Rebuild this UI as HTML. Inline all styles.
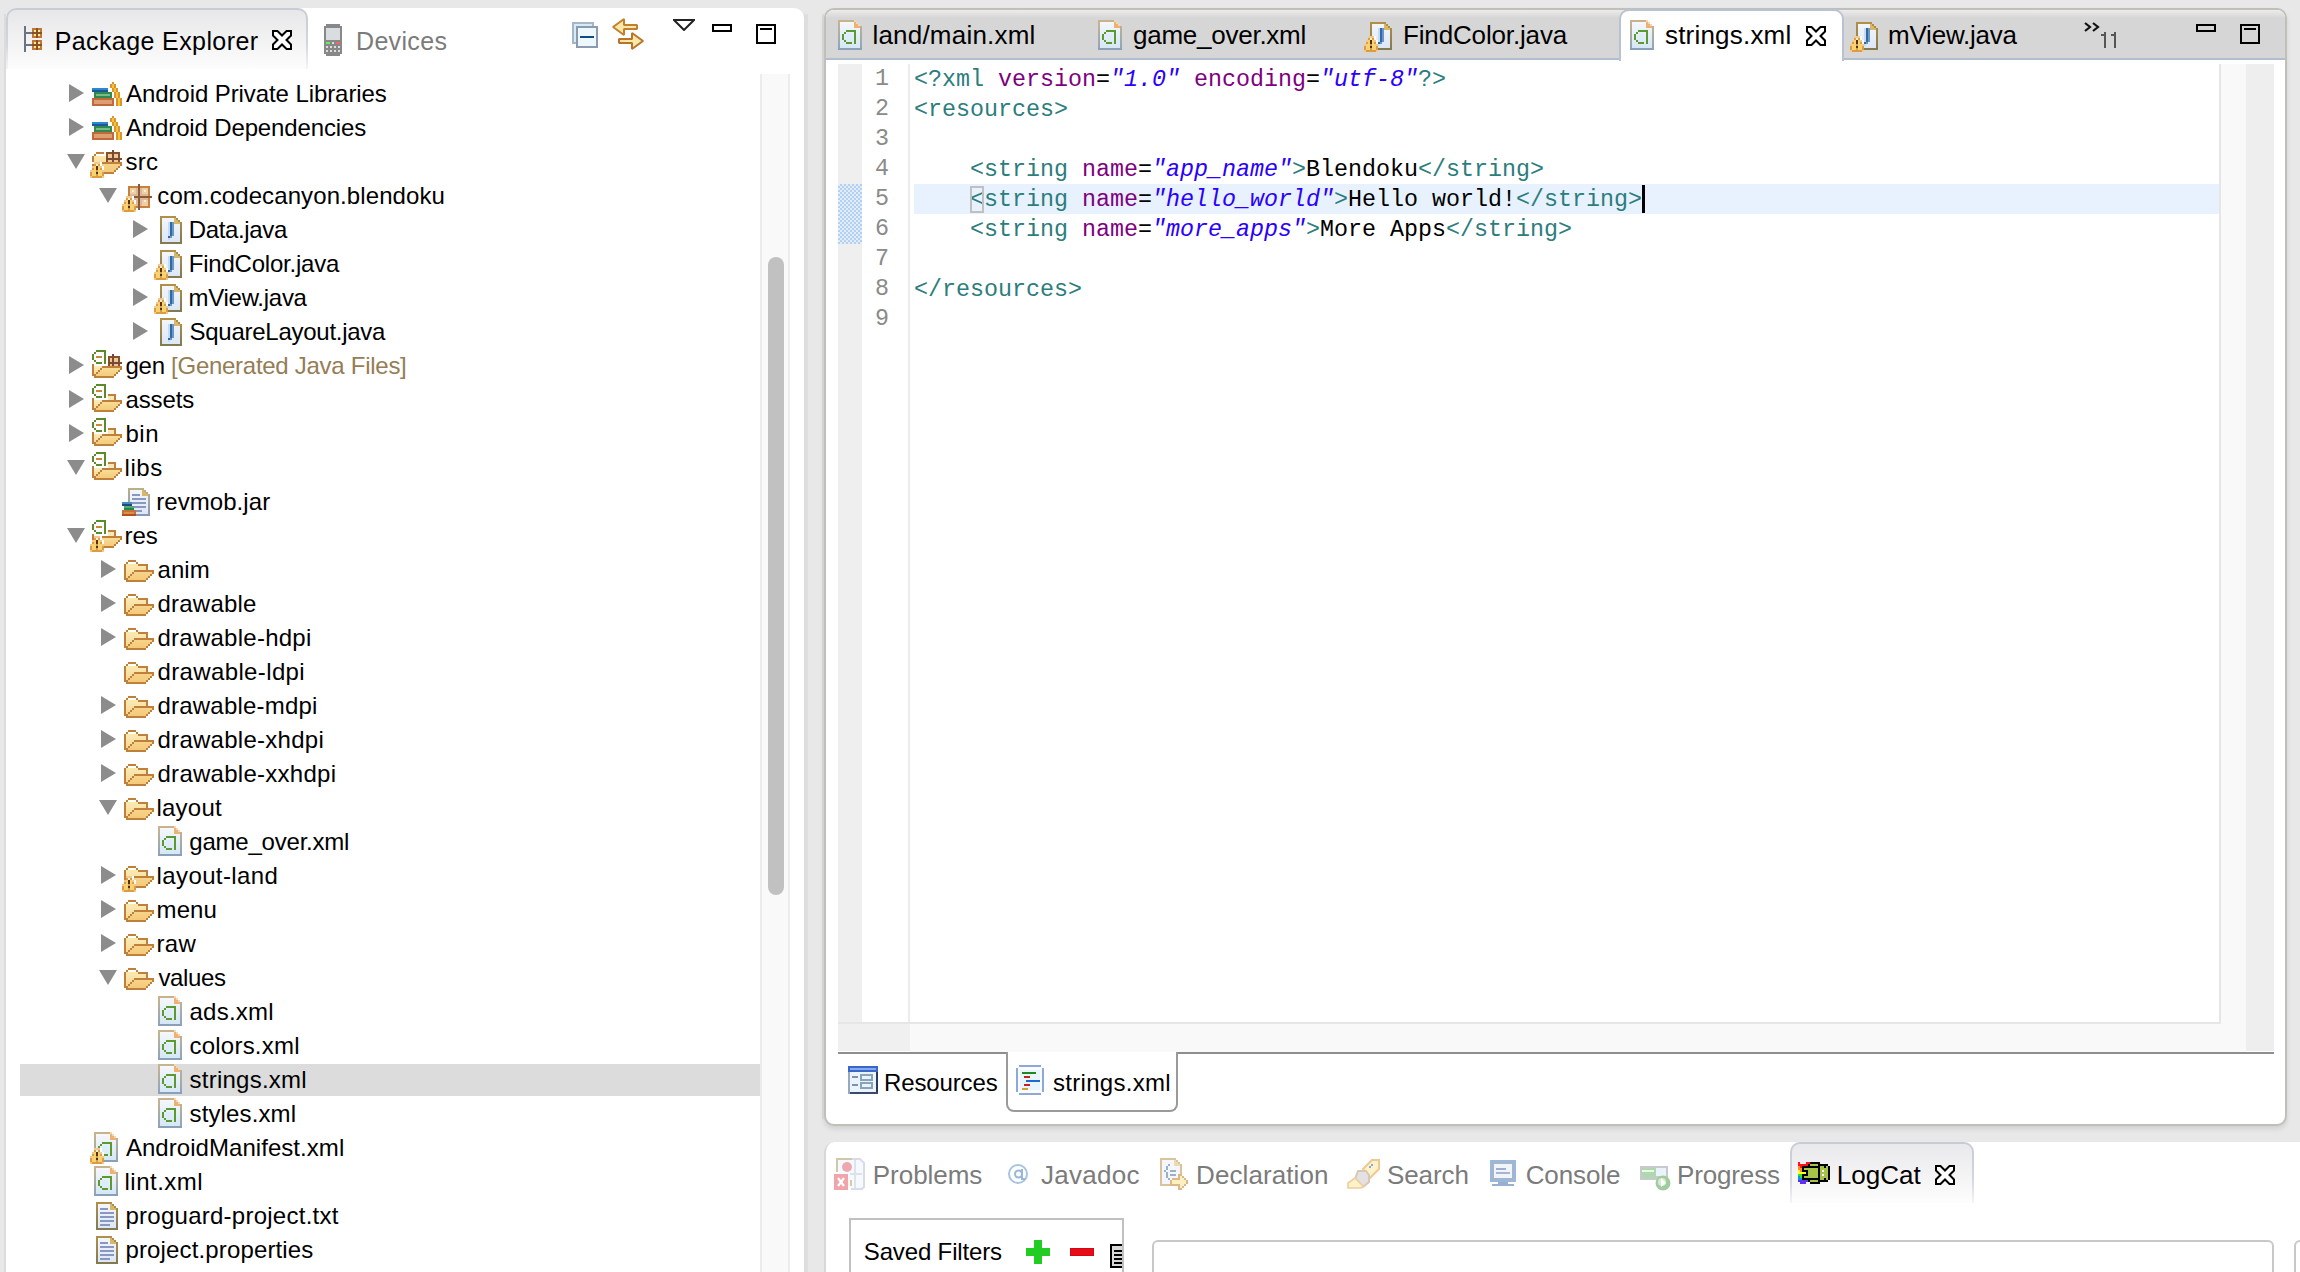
<!DOCTYPE html>
<html><head><meta charset="utf-8"><style>
*{margin:0;padding:0;box-sizing:border-box}
html,body{width:2300px;height:1272px;overflow:hidden;background:#e8e8e8;font-family:"Liberation Sans", sans-serif;}
.a{position:absolute}
.t{position:absolute;white-space:nowrap;font-size:24px;color:#000;line-height:34px;height:34px}
svg.i{position:absolute;width:32px;height:32px;overflow:visible;shape-rendering:crispEdges}
.arr{position:absolute;width:0;height:0}
.ar{border-top:9px solid transparent;border-bottom:9px solid transparent;border-left:15px solid #8c8c8c}
.ad{border-left:9px solid transparent;border-right:9px solid transparent;border-top:15px solid #8c8c8c}
.code{position:absolute;font-family:"Liberation Mono", monospace;font-size:23.33px;white-space:pre;line-height:30px;height:30px;color:#000}
.tg{color:#2c7d7d} .at{color:#7f007f} .av{color:#2a00ff;font-style:italic}
.ln{position:absolute;font-family:"Liberation Mono", monospace;font-size:23.33px;line-height:30px;color:#8a8a8a;text-align:right;width:40px}
.tab{position:absolute;white-space:nowrap;font-size:24px;line-height:34px;height:34px}
</style></head>
<body><svg width="0" height="0" style="position:absolute"><defs><symbol id="folder" viewBox="0 0 32 32" overflow="visible"><rect x="4" y="6" width="8" height="2" fill="#c0803a"/><rect x="2" y="8" width="2" height="2" fill="#c0803a"/><rect x="4" y="8" width="8" height="2" fill="#ffffff"/><rect x="12" y="8" width="2" height="2" fill="#c0803a"/><rect x="0" y="10" width="2" height="2" fill="#c0803a"/><rect x="2" y="10" width="12" height="2" fill="#fbe9a8"/><rect x="14" y="10" width="10" height="2" fill="#c0803a"/><rect x="0" y="12" width="2" height="2" fill="#c0803a"/><rect x="2" y="12" width="20" height="2" fill="#fae6b0"/><rect x="22" y="12" width="2" height="2" fill="#c0803a"/><rect x="0" y="14" width="2" height="2" fill="#c0803a"/><rect x="2" y="14" width="20" height="2" fill="#f9e4aa"/><rect x="22" y="14" width="2" height="2" fill="#c0803a"/><rect x="0" y="16" width="2" height="2" fill="#c0803a"/><rect x="2" y="16" width="8" height="2" fill="#f8e1a5"/><rect x="10" y="16" width="20" height="2" fill="#c0803a"/><rect x="0" y="18" width="2" height="2" fill="#c0803a"/><rect x="2" y="18" width="6" height="2" fill="#f8dea0"/><rect x="8" y="18" width="2" height="2" fill="#c0803a"/><rect x="10" y="18" width="18" height="2" fill="#f6d388"/><rect x="28" y="18" width="2" height="2" fill="#c0803a"/><rect x="0" y="20" width="2" height="2" fill="#c0803a"/><rect x="2" y="20" width="4" height="2" fill="#f8dc9a"/><rect x="6" y="20" width="2" height="2" fill="#c0803a"/><rect x="8" y="20" width="18" height="2" fill="#f5d084"/><rect x="26" y="20" width="2" height="2" fill="#c0803a"/><rect x="0" y="22" width="2" height="2" fill="#c0803a"/><rect x="2" y="22" width="2" height="2" fill="#f7d995"/><rect x="4" y="22" width="2" height="2" fill="#c0803a"/><rect x="6" y="22" width="18" height="2" fill="#f5ce80"/><rect x="24" y="22" width="2" height="2" fill="#c0803a"/><rect x="0" y="24" width="4" height="2" fill="#c0803a"/><rect x="4" y="24" width="18" height="2" fill="#f4cb7c"/><rect x="22" y="24" width="2" height="2" fill="#c0803a"/><rect x="2" y="26" width="20" height="2" fill="#c0803a"/></symbol><symbol id="afolder" viewBox="0 0 32 32" overflow="visible"><rect x="4" y="0" width="10" height="2" fill="#5a8a2a"/><rect x="2" y="2" width="2" height="2" fill="#5a8a2a"/><rect x="12" y="2" width="2" height="2" fill="#5a8a2a"/><rect x="0" y="4" width="2" height="2" fill="#5a8a2a"/><rect x="12" y="4" width="2" height="2" fill="#5a8a2a"/><rect x="0" y="6" width="2" height="2" fill="#5a8a2a"/><rect x="4" y="6" width="6" height="2" fill="#c88838"/><rect x="12" y="6" width="2" height="2" fill="#5a8a2a"/><rect x="0" y="8" width="2" height="2" fill="#5a8a2a"/><rect x="12" y="8" width="2" height="2" fill="#5a8a2a"/><rect x="2" y="10" width="2" height="2" fill="#5a8a2a"/><rect x="12" y="10" width="2" height="2" fill="#5a8a2a"/><rect x="16" y="10" width="8" height="2" fill="#c0803a"/><rect x="4" y="12" width="6" height="2" fill="#5a8a2a"/><rect x="12" y="12" width="2" height="2" fill="#5a8a2a"/><rect x="16" y="12" width="6" height="2" fill="#f8e8b8"/><rect x="22" y="12" width="2" height="2" fill="#c0803a"/><rect x="0" y="14" width="2" height="2" fill="#c0803a"/><rect x="16" y="14" width="6" height="2" fill="#f8e8b8"/><rect x="22" y="14" width="2" height="2" fill="#c0803a"/><rect x="0" y="16" width="2" height="2" fill="#c0803a"/><rect x="2" y="16" width="8" height="2" fill="#faeab7"/><rect x="10" y="16" width="20" height="2" fill="#c0803a"/><rect x="0" y="18" width="2" height="2" fill="#c0803a"/><rect x="2" y="18" width="6" height="2" fill="#f9e5ae"/><rect x="8" y="18" width="2" height="2" fill="#c0803a"/><rect x="10" y="18" width="18" height="2" fill="#f7db93"/><rect x="28" y="18" width="2" height="2" fill="#c0803a"/><rect x="0" y="20" width="2" height="2" fill="#c0803a"/><rect x="2" y="20" width="4" height="2" fill="#f8e1a5"/><rect x="6" y="20" width="2" height="2" fill="#c0803a"/><rect x="8" y="20" width="18" height="2" fill="#f6d68c"/><rect x="26" y="20" width="2" height="2" fill="#c0803a"/><rect x="0" y="22" width="2" height="2" fill="#c0803a"/><rect x="2" y="22" width="2" height="2" fill="#f8dd9c"/><rect x="4" y="22" width="2" height="2" fill="#c0803a"/><rect x="6" y="22" width="18" height="2" fill="#f5d185"/><rect x="24" y="22" width="2" height="2" fill="#c0803a"/><rect x="0" y="24" width="4" height="2" fill="#c0803a"/><rect x="4" y="24" width="18" height="2" fill="#f5cd7f"/><rect x="22" y="24" width="2" height="2" fill="#c0803a"/><rect x="2" y="26" width="20" height="2" fill="#c0803a"/></symbol><symbol id="genfolder" viewBox="0 0 32 32" overflow="visible"><rect x="4" y="0" width="10" height="2" fill="#5a8a2a"/><rect x="2" y="2" width="2" height="2" fill="#5a8a2a"/><rect x="12" y="2" width="2" height="2" fill="#5a8a2a"/><rect x="0" y="4" width="2" height="2" fill="#5a8a2a"/><rect x="12" y="4" width="2" height="2" fill="#5a8a2a"/><rect x="20" y="4" width="2" height="2" fill="#7a4a30"/><rect x="0" y="6" width="2" height="2" fill="#5a8a2a"/><rect x="4" y="6" width="6" height="2" fill="#c88838"/><rect x="12" y="6" width="2" height="2" fill="#5a8a2a"/><rect x="16" y="6" width="4" height="2" fill="#8a5028"/><rect x="20" y="6" width="2" height="2" fill="#7a4a30"/><rect x="22" y="6" width="6" height="2" fill="#8a5028"/><rect x="0" y="8" width="2" height="2" fill="#5a8a2a"/><rect x="12" y="8" width="2" height="2" fill="#5a8a2a"/><rect x="16" y="8" width="2" height="2" fill="#8a5028"/><rect x="18" y="8" width="2" height="2" fill="#ecc898"/><rect x="20" y="8" width="2" height="2" fill="#7a4a30"/><rect x="22" y="8" width="4" height="2" fill="#ecc898"/><rect x="26" y="8" width="2" height="2" fill="#8a5028"/><rect x="2" y="10" width="2" height="2" fill="#5a8a2a"/><rect x="12" y="10" width="2" height="2" fill="#5a8a2a"/><rect x="16" y="10" width="2" height="2" fill="#8a5028"/><rect x="18" y="10" width="2" height="2" fill="#ecc898"/><rect x="20" y="10" width="2" height="2" fill="#7a4a30"/><rect x="22" y="10" width="4" height="2" fill="#ecc898"/><rect x="26" y="10" width="2" height="2" fill="#8a5028"/><rect x="4" y="12" width="6" height="2" fill="#5a8a2a"/><rect x="12" y="12" width="2" height="2" fill="#5a8a2a"/><rect x="16" y="12" width="14" height="2" fill="#7a4a30"/><rect x="0" y="14" width="2" height="2" fill="#c0803a"/><rect x="16" y="14" width="2" height="2" fill="#8a5028"/><rect x="18" y="14" width="2" height="2" fill="#ecc898"/><rect x="20" y="14" width="2" height="2" fill="#7a4a30"/><rect x="22" y="14" width="4" height="2" fill="#ecc898"/><rect x="26" y="14" width="2" height="2" fill="#8a5028"/><rect x="0" y="16" width="2" height="2" fill="#c0803a"/><rect x="2" y="16" width="8" height="2" fill="#faeab7"/><rect x="10" y="16" width="20" height="2" fill="#c0803a"/><rect x="0" y="18" width="2" height="2" fill="#c0803a"/><rect x="2" y="18" width="6" height="2" fill="#f9e5ae"/><rect x="8" y="18" width="2" height="2" fill="#c0803a"/><rect x="10" y="18" width="18" height="2" fill="#f7db93"/><rect x="28" y="18" width="2" height="2" fill="#c0803a"/><rect x="0" y="20" width="2" height="2" fill="#c0803a"/><rect x="2" y="20" width="4" height="2" fill="#f8e1a5"/><rect x="6" y="20" width="2" height="2" fill="#c0803a"/><rect x="8" y="20" width="18" height="2" fill="#f6d68c"/><rect x="26" y="20" width="2" height="2" fill="#c0803a"/><rect x="0" y="22" width="2" height="2" fill="#c0803a"/><rect x="2" y="22" width="2" height="2" fill="#f8dd9c"/><rect x="4" y="22" width="2" height="2" fill="#c0803a"/><rect x="6" y="22" width="18" height="2" fill="#f5d185"/><rect x="24" y="22" width="2" height="2" fill="#c0803a"/><rect x="0" y="24" width="4" height="2" fill="#c0803a"/><rect x="4" y="24" width="18" height="2" fill="#f5cd7f"/><rect x="22" y="24" width="2" height="2" fill="#c0803a"/><rect x="2" y="26" width="20" height="2" fill="#c0803a"/></symbol><symbol id="srcfolder" viewBox="0 0 32 32" overflow="visible"><rect x="20" y="4" width="2" height="2" fill="#7a4a30"/><rect x="4" y="6" width="8" height="2" fill="#c0803a"/><rect x="14" y="6" width="6" height="2" fill="#8a5028"/><rect x="20" y="6" width="2" height="2" fill="#7a4a30"/><rect x="22" y="6" width="6" height="2" fill="#8a5028"/><rect x="2" y="8" width="2" height="2" fill="#c0803a"/><rect x="4" y="8" width="10" height="2" fill="#ffffff"/><rect x="14" y="8" width="2" height="2" fill="#8a5028"/><rect x="16" y="8" width="4" height="2" fill="#ecc898"/><rect x="20" y="8" width="2" height="2" fill="#7a4a30"/><rect x="22" y="8" width="4" height="2" fill="#ecc898"/><rect x="26" y="8" width="2" height="2" fill="#8a5028"/><rect x="0" y="10" width="2" height="2" fill="#c0803a"/><rect x="2" y="10" width="12" height="2" fill="#fbe9a8"/><rect x="14" y="10" width="2" height="2" fill="#8a5028"/><rect x="16" y="10" width="4" height="2" fill="#ecc898"/><rect x="20" y="10" width="2" height="2" fill="#7a4a30"/><rect x="22" y="10" width="4" height="2" fill="#ecc898"/><rect x="26" y="10" width="2" height="2" fill="#8a5028"/><rect x="0" y="12" width="2" height="2" fill="#c0803a"/><rect x="2" y="12" width="12" height="2" fill="#f9e5ac"/><rect x="14" y="12" width="16" height="2" fill="#7a4a30"/><rect x="0" y="14" width="2" height="2" fill="#c0803a"/><rect x="2" y="14" width="12" height="2" fill="#f9e2a7"/><rect x="14" y="14" width="2" height="2" fill="#8a5028"/><rect x="16" y="14" width="4" height="2" fill="#ecc898"/><rect x="20" y="14" width="2" height="2" fill="#7a4a30"/><rect x="22" y="14" width="4" height="2" fill="#ecc898"/><rect x="26" y="14" width="2" height="2" fill="#8a5028"/><rect x="10" y="16" width="20" height="2" fill="#c0803a"/><rect x="0" y="18" width="2" height="2" fill="#c0803a"/><rect x="2" y="18" width="6" height="2" fill="#f8dd9e"/><rect x="8" y="18" width="2" height="2" fill="#c0803a"/><rect x="10" y="18" width="18" height="2" fill="#f5d287"/><rect x="28" y="18" width="2" height="2" fill="#c0803a"/><rect x="0" y="20" width="2" height="2" fill="#c0803a"/><rect x="2" y="20" width="4" height="2" fill="#f7db99"/><rect x="6" y="20" width="2" height="2" fill="#c0803a"/><rect x="8" y="20" width="18" height="2" fill="#f5d083"/><rect x="26" y="20" width="2" height="2" fill="#c0803a"/><rect x="0" y="22" width="2" height="2" fill="#c0803a"/><rect x="2" y="22" width="2" height="2" fill="#f7d994"/><rect x="4" y="22" width="2" height="2" fill="#c0803a"/><rect x="6" y="22" width="18" height="2" fill="#f5cd7f"/><rect x="24" y="22" width="2" height="2" fill="#c0803a"/><rect x="0" y="24" width="4" height="2" fill="#c0803a"/><rect x="4" y="24" width="18" height="2" fill="#f4cb7c"/><rect x="22" y="24" width="2" height="2" fill="#c0803a"/><rect x="2" y="26" width="20" height="2" fill="#c0803a"/></symbol><symbol id="pkg" viewBox="0 0 32 32" overflow="visible"><rect x="14" y="4" width="2" height="2" fill="#8a5a3a"/><rect x="4" y="6" width="10" height="2" fill="#c8803e"/><rect x="14" y="6" width="2" height="2" fill="#8a5a3a"/><rect x="16" y="6" width="10" height="2" fill="#c8803e"/><rect x="4" y="8" width="2" height="2" fill="#c8803e"/><rect x="6" y="8" width="6" height="2" fill="#eccfa8"/><rect x="12" y="8" width="2" height="2" fill="#dcb898"/><rect x="14" y="8" width="2" height="2" fill="#8a5a3a"/><rect x="16" y="8" width="2" height="2" fill="#dcb898"/><rect x="18" y="8" width="6" height="2" fill="#eccfa8"/><rect x="24" y="8" width="2" height="2" fill="#c8803e"/><rect x="4" y="10" width="2" height="2" fill="#c8803e"/><rect x="6" y="10" width="2" height="2" fill="#eccfa8"/><rect x="8" y="10" width="2" height="2" fill="#faf2c0"/><rect x="10" y="10" width="2" height="2" fill="#eccfa8"/><rect x="12" y="10" width="2" height="2" fill="#dcb898"/><rect x="14" y="10" width="2" height="2" fill="#8a5a3a"/><rect x="16" y="10" width="2" height="2" fill="#dcb898"/><rect x="18" y="10" width="2" height="2" fill="#eccfa8"/><rect x="20" y="10" width="2" height="2" fill="#faf2c0"/><rect x="22" y="10" width="2" height="2" fill="#eccfa8"/><rect x="24" y="10" width="2" height="2" fill="#c8803e"/><rect x="4" y="12" width="2" height="2" fill="#c8803e"/><rect x="6" y="12" width="6" height="2" fill="#eccfa8"/><rect x="12" y="12" width="2" height="2" fill="#dcb898"/><rect x="14" y="12" width="2" height="2" fill="#8a5a3a"/><rect x="16" y="12" width="2" height="2" fill="#dcb898"/><rect x="18" y="12" width="6" height="2" fill="#eccfa8"/><rect x="24" y="12" width="2" height="2" fill="#c8803e"/><rect x="4" y="14" width="2" height="2" fill="#c8803e"/><rect x="6" y="14" width="8" height="2" fill="#dcb898"/><rect x="14" y="14" width="2" height="2" fill="#8a5a3a"/><rect x="16" y="14" width="8" height="2" fill="#dcb898"/><rect x="24" y="14" width="2" height="2" fill="#c8803e"/><rect x="4" y="16" width="2" height="2" fill="#c8803e"/><rect x="6" y="16" width="4" height="2" fill="#dcb898"/><rect x="10" y="16" width="18" height="2" fill="#8a5a3a"/><rect x="4" y="18" width="2" height="2" fill="#c8803e"/><rect x="6" y="18" width="8" height="2" fill="#dcb898"/><rect x="14" y="18" width="2" height="2" fill="#8a5a3a"/><rect x="16" y="18" width="8" height="2" fill="#dcb898"/><rect x="24" y="18" width="2" height="2" fill="#c8803e"/><rect x="4" y="20" width="2" height="2" fill="#c8803e"/><rect x="6" y="20" width="6" height="2" fill="#eccfa8"/><rect x="12" y="20" width="2" height="2" fill="#dcb898"/><rect x="14" y="20" width="2" height="2" fill="#8a5a3a"/><rect x="16" y="20" width="2" height="2" fill="#dcb898"/><rect x="18" y="20" width="2" height="2" fill="#eccfa8"/><rect x="20" y="20" width="2" height="2" fill="#faf2c0"/><rect x="22" y="20" width="2" height="2" fill="#eccfa8"/><rect x="24" y="20" width="2" height="2" fill="#c8803e"/><rect x="4" y="22" width="2" height="2" fill="#c8803e"/><rect x="6" y="22" width="6" height="2" fill="#eccfa8"/><rect x="12" y="22" width="2" height="2" fill="#dcb898"/><rect x="14" y="22" width="2" height="2" fill="#8a5a3a"/><rect x="16" y="22" width="2" height="2" fill="#dcb898"/><rect x="18" y="22" width="6" height="2" fill="#eccfa8"/><rect x="24" y="22" width="2" height="2" fill="#c8803e"/><rect x="4" y="24" width="2" height="2" fill="#c8803e"/><rect x="6" y="24" width="6" height="2" fill="#eccfa8"/><rect x="12" y="24" width="2" height="2" fill="#dcb898"/><rect x="14" y="24" width="2" height="2" fill="#8a5a3a"/><rect x="16" y="24" width="2" height="2" fill="#dcb898"/><rect x="18" y="24" width="6" height="2" fill="#eccfa8"/><rect x="24" y="24" width="2" height="2" fill="#c8803e"/><rect x="4" y="26" width="10" height="2" fill="#c8803e"/><rect x="14" y="26" width="2" height="2" fill="#8a5a3a"/><rect x="16" y="26" width="10" height="2" fill="#c8803e"/><rect x="14" y="28" width="2" height="2" fill="#8a5a3a"/></symbol><symbol id="lib" viewBox="0 0 32 32" overflow="visible"><rect x="20" y="4" width="2" height="2" fill="#dc9428"/><rect x="18" y="6" width="2" height="2" fill="#dc9428"/><rect x="20" y="6" width="2" height="2" fill="#f0c440"/><rect x="22" y="6" width="2" height="2" fill="#dc9428"/><rect x="18" y="8" width="2" height="2" fill="#dc9428"/><rect x="20" y="8" width="2" height="2" fill="#f0c440"/><rect x="22" y="8" width="2" height="2" fill="#dc9428"/><rect x="0" y="10" width="16" height="2" fill="#2a8ad0"/><rect x="20" y="10" width="2" height="2" fill="#dc9428"/><rect x="22" y="10" width="2" height="2" fill="#f0c440"/><rect x="24" y="10" width="2" height="2" fill="#dc9428"/><rect x="0" y="12" width="16" height="2" fill="#1e5896"/><rect x="20" y="12" width="2" height="2" fill="#dc9428"/><rect x="22" y="12" width="2" height="2" fill="#f0c440"/><rect x="24" y="12" width="2" height="2" fill="#dc9428"/><rect x="2" y="14" width="18" height="2" fill="#2e8a50"/><rect x="22" y="14" width="2" height="2" fill="#dc9428"/><rect x="24" y="14" width="2" height="2" fill="#f0c440"/><rect x="26" y="14" width="2" height="2" fill="#dc9428"/><rect x="2" y="16" width="2" height="2" fill="#2e8a50"/><rect x="4" y="16" width="14" height="2" fill="#7abc86"/><rect x="18" y="16" width="2" height="2" fill="#2e8a50"/><rect x="22" y="16" width="2" height="2" fill="#dc9428"/><rect x="24" y="16" width="2" height="2" fill="#f0c440"/><rect x="26" y="16" width="2" height="2" fill="#dc9428"/><rect x="2" y="18" width="18" height="2" fill="#2e8a50"/><rect x="22" y="18" width="2" height="2" fill="#dc9428"/><rect x="24" y="18" width="2" height="2" fill="#f0c440"/><rect x="26" y="18" width="2" height="2" fill="#dc9428"/><rect x="0" y="20" width="22" height="2" fill="#c2683a"/><rect x="24" y="20" width="2" height="2" fill="#dc9428"/><rect x="26" y="20" width="2" height="2" fill="#f0c440"/><rect x="28" y="20" width="2" height="2" fill="#dc9428"/><rect x="0" y="22" width="2" height="2" fill="#c2683a"/><rect x="2" y="22" width="18" height="2" fill="#dca070"/><rect x="20" y="22" width="2" height="2" fill="#c2683a"/><rect x="24" y="22" width="2" height="2" fill="#dc9428"/><rect x="26" y="22" width="2" height="2" fill="#f0c440"/><rect x="28" y="22" width="2" height="2" fill="#dc9428"/><rect x="0" y="24" width="2" height="2" fill="#c2683a"/><rect x="2" y="24" width="18" height="2" fill="#dca070"/><rect x="20" y="24" width="2" height="2" fill="#c2683a"/><rect x="24" y="24" width="2" height="2" fill="#dc9428"/><rect x="26" y="24" width="2" height="2" fill="#f0c440"/><rect x="28" y="24" width="2" height="2" fill="#dc9428"/><rect x="0" y="26" width="22" height="2" fill="#c2683a"/><rect x="24" y="26" width="2" height="2" fill="#dc9428"/><rect x="26" y="26" width="2" height="2" fill="#f0c440"/><rect x="28" y="26" width="2" height="2" fill="#dc9428"/></symbol><symbol id="java" viewBox="0 0 32 32" overflow="visible"><rect x="4" y="2" width="16" height="2" fill="#b09048"/><rect x="4" y="4" width="2" height="2" fill="#ad8e49"/><rect x="6" y="4" width="12" height="2" fill="#f2f6fc"/><rect x="18" y="4" width="2" height="2" fill="#d8b868"/><rect x="20" y="4" width="2" height="2" fill="#ad8e49"/><rect x="4" y="6" width="2" height="2" fill="#a98d49"/><rect x="6" y="6" width="12" height="2" fill="#f0f4fb"/><rect x="18" y="6" width="4" height="2" fill="#d8b868"/><rect x="22" y="6" width="2" height="2" fill="#a98d49"/><rect x="4" y="8" width="2" height="2" fill="#a68b4a"/><rect x="6" y="8" width="6" height="2" fill="#eef3fb"/><rect x="12" y="8" width="2" height="2" fill="#c8dcf0"/><rect x="14" y="8" width="2" height="2" fill="#2e6aa8"/><rect x="16" y="8" width="2" height="2" fill="#6a96c8"/><rect x="18" y="8" width="6" height="2" fill="#d8b868"/><rect x="24" y="8" width="2" height="2" fill="#a68b4a"/><rect x="4" y="10" width="2" height="2" fill="#a2894a"/><rect x="6" y="10" width="6" height="2" fill="#edf2fa"/><rect x="12" y="10" width="2" height="2" fill="#c8dcf0"/><rect x="14" y="10" width="2" height="2" fill="#2e6aa8"/><rect x="16" y="10" width="2" height="2" fill="#6a96c8"/><rect x="18" y="10" width="6" height="2" fill="#edf2fa"/><rect x="24" y="10" width="2" height="2" fill="#a2894a"/><rect x="4" y="12" width="2" height="2" fill="#9f884b"/><rect x="6" y="12" width="6" height="2" fill="#ebf0fa"/><rect x="12" y="12" width="2" height="2" fill="#c8dcf0"/><rect x="14" y="12" width="2" height="2" fill="#2e6aa8"/><rect x="16" y="12" width="2" height="2" fill="#6a96c8"/><rect x="18" y="12" width="6" height="2" fill="#ebf0fa"/><rect x="24" y="12" width="2" height="2" fill="#9f884b"/><rect x="4" y="14" width="2" height="2" fill="#9c864c"/><rect x="6" y="14" width="6" height="2" fill="#e9eff9"/><rect x="12" y="14" width="2" height="2" fill="#c8dcf0"/><rect x="14" y="14" width="2" height="2" fill="#2e6aa8"/><rect x="16" y="14" width="2" height="2" fill="#6a96c8"/><rect x="18" y="14" width="6" height="2" fill="#e9eff9"/><rect x="24" y="14" width="2" height="2" fill="#9c864c"/><rect x="4" y="16" width="2" height="2" fill="#98844c"/><rect x="6" y="16" width="6" height="2" fill="#e7eef9"/><rect x="12" y="16" width="2" height="2" fill="#c8dcf0"/><rect x="14" y="16" width="2" height="2" fill="#2e6aa8"/><rect x="16" y="16" width="2" height="2" fill="#6a96c8"/><rect x="18" y="16" width="6" height="2" fill="#e7eef9"/><rect x="24" y="16" width="2" height="2" fill="#98844c"/><rect x="4" y="18" width="2" height="2" fill="#95824d"/><rect x="6" y="18" width="6" height="2" fill="#e5edf8"/><rect x="12" y="18" width="2" height="2" fill="#c8dcf0"/><rect x="14" y="18" width="2" height="2" fill="#2e6aa8"/><rect x="16" y="18" width="2" height="2" fill="#6a96c8"/><rect x="18" y="18" width="6" height="2" fill="#e5edf8"/><rect x="24" y="18" width="2" height="2" fill="#95824d"/><rect x="4" y="20" width="2" height="2" fill="#92814e"/><rect x="6" y="20" width="6" height="2" fill="#e3ebf8"/><rect x="12" y="20" width="2" height="2" fill="#c8dcf0"/><rect x="14" y="20" width="2" height="2" fill="#2e6aa8"/><rect x="16" y="20" width="2" height="2" fill="#6a96c8"/><rect x="18" y="20" width="6" height="2" fill="#e3ebf8"/><rect x="24" y="20" width="2" height="2" fill="#92814e"/><rect x="4" y="22" width="2" height="2" fill="#8e7f4e"/><rect x="6" y="22" width="6" height="2" fill="#e2eaf7"/><rect x="12" y="22" width="2" height="2" fill="#2e6aa8"/><rect x="14" y="22" width="2" height="2" fill="#6a96c8"/><rect x="16" y="22" width="8" height="2" fill="#e2eaf7"/><rect x="24" y="22" width="2" height="2" fill="#8e7f4e"/><rect x="4" y="24" width="2" height="2" fill="#8b7d4f"/><rect x="6" y="24" width="6" height="2" fill="#e0e9f7"/><rect x="12" y="24" width="2" height="2" fill="#c8dcf0"/><rect x="14" y="24" width="10" height="2" fill="#e0e9f7"/><rect x="24" y="24" width="2" height="2" fill="#8b7d4f"/><rect x="4" y="26" width="2" height="2" fill="#877c4f"/><rect x="6" y="26" width="18" height="2" fill="#dee7f6"/><rect x="24" y="26" width="2" height="2" fill="#877c4f"/><rect x="4" y="28" width="22" height="2" fill="#847a50"/></symbol><symbol id="txt" viewBox="0 0 32 32" overflow="visible"><rect x="4" y="2" width="16" height="2" fill="#b09048"/><rect x="4" y="4" width="2" height="2" fill="#ad8e49"/><rect x="6" y="4" width="12" height="2" fill="#f2f6fc"/><rect x="18" y="4" width="2" height="2" fill="#d8b868"/><rect x="20" y="4" width="2" height="2" fill="#ad8e49"/><rect x="4" y="6" width="2" height="2" fill="#a98d49"/><rect x="6" y="6" width="12" height="2" fill="#f0f4fb"/><rect x="18" y="6" width="4" height="2" fill="#d8b868"/><rect x="22" y="6" width="2" height="2" fill="#a98d49"/><rect x="4" y="8" width="2" height="2" fill="#a68b4a"/><rect x="6" y="8" width="2" height="2" fill="#eef3fb"/><rect x="8" y="8" width="8" height="2" fill="#8898c0"/><rect x="16" y="8" width="2" height="2" fill="#eef3fb"/><rect x="18" y="8" width="6" height="2" fill="#d8b868"/><rect x="24" y="8" width="2" height="2" fill="#a68b4a"/><rect x="4" y="10" width="2" height="2" fill="#a2894a"/><rect x="6" y="10" width="18" height="2" fill="#edf2fa"/><rect x="24" y="10" width="2" height="2" fill="#a2894a"/><rect x="4" y="12" width="2" height="2" fill="#9f884b"/><rect x="6" y="12" width="2" height="2" fill="#ebf0fa"/><rect x="8" y="12" width="14" height="2" fill="#8898c0"/><rect x="22" y="12" width="2" height="2" fill="#ebf0fa"/><rect x="24" y="12" width="2" height="2" fill="#9f884b"/><rect x="4" y="14" width="2" height="2" fill="#9c864c"/><rect x="6" y="14" width="18" height="2" fill="#e9eff9"/><rect x="24" y="14" width="2" height="2" fill="#9c864c"/><rect x="4" y="16" width="2" height="2" fill="#98844c"/><rect x="6" y="16" width="2" height="2" fill="#e7eef9"/><rect x="8" y="16" width="14" height="2" fill="#8898c0"/><rect x="22" y="16" width="2" height="2" fill="#e7eef9"/><rect x="24" y="16" width="2" height="2" fill="#98844c"/><rect x="4" y="18" width="2" height="2" fill="#95824d"/><rect x="6" y="18" width="18" height="2" fill="#e5edf8"/><rect x="24" y="18" width="2" height="2" fill="#95824d"/><rect x="4" y="20" width="2" height="2" fill="#92814e"/><rect x="6" y="20" width="2" height="2" fill="#e3ebf8"/><rect x="8" y="20" width="14" height="2" fill="#8898c0"/><rect x="22" y="20" width="2" height="2" fill="#e3ebf8"/><rect x="24" y="20" width="2" height="2" fill="#92814e"/><rect x="4" y="22" width="2" height="2" fill="#8e7f4e"/><rect x="6" y="22" width="18" height="2" fill="#e2eaf7"/><rect x="24" y="22" width="2" height="2" fill="#8e7f4e"/><rect x="4" y="24" width="2" height="2" fill="#8b7d4f"/><rect x="6" y="24" width="2" height="2" fill="#e0e9f7"/><rect x="8" y="24" width="10" height="2" fill="#8898c0"/><rect x="18" y="24" width="6" height="2" fill="#e0e9f7"/><rect x="24" y="24" width="2" height="2" fill="#8b7d4f"/><rect x="4" y="26" width="2" height="2" fill="#877c4f"/><rect x="6" y="26" width="18" height="2" fill="#dee7f6"/><rect x="24" y="26" width="2" height="2" fill="#877c4f"/><rect x="4" y="28" width="22" height="2" fill="#847a50"/></symbol><symbol id="xml" viewBox="0 0 32 32" overflow="visible"><rect x="2" y="0" width="16" height="2" fill="#c8b48c"/><rect x="18" y="0" width="2" height="2" fill="#f0d8b8"/><rect x="2" y="2" width="2" height="2" fill="#c4b38f"/><rect x="4" y="2" width="14" height="2" fill="#f4f7fb"/><rect x="18" y="2" width="2" height="2" fill="#f0b070"/><rect x="20" y="2" width="2" height="2" fill="#f0d8b8"/><rect x="2" y="4" width="2" height="2" fill="#c0b293"/><rect x="4" y="4" width="14" height="2" fill="#f1f5fb"/><rect x="18" y="4" width="4" height="2" fill="#f0b070"/><rect x="22" y="4" width="2" height="2" fill="#f0d8b8"/><rect x="2" y="6" width="2" height="2" fill="#bcb196"/><rect x="4" y="6" width="14" height="2" fill="#eff4fa"/><rect x="18" y="6" width="6" height="2" fill="#f0b070"/><rect x="24" y="6" width="2" height="2" fill="#bcb196"/><rect x="2" y="8" width="2" height="2" fill="#b7af9a"/><rect x="4" y="8" width="20" height="2" fill="#ecf3fa"/><rect x="24" y="8" width="2" height="2" fill="#b7af9a"/><rect x="2" y="10" width="2" height="2" fill="#b3ae9d"/><rect x="4" y="10" width="6" height="2" fill="#eaf2f9"/><rect x="10" y="10" width="10" height="2" fill="#5a9a30"/><rect x="20" y="10" width="4" height="2" fill="#eaf2f9"/><rect x="24" y="10" width="2" height="2" fill="#b3ae9d"/><rect x="2" y="12" width="2" height="2" fill="#afada1"/><rect x="4" y="12" width="4" height="2" fill="#e7f0f9"/><rect x="8" y="12" width="2" height="2" fill="#5a9a30"/><rect x="10" y="12" width="8" height="2" fill="#e7f0f9"/><rect x="18" y="12" width="2" height="2" fill="#5a9a30"/><rect x="20" y="12" width="4" height="2" fill="#e7f0f9"/><rect x="24" y="12" width="2" height="2" fill="#afada1"/><rect x="2" y="14" width="2" height="2" fill="#abaca4"/><rect x="4" y="14" width="2" height="2" fill="#e5eff8"/><rect x="6" y="14" width="2" height="2" fill="#5a9a30"/><rect x="8" y="14" width="2" height="2" fill="#e5eff8"/><rect x="10" y="14" width="6" height="2" fill="#dcecf8"/><rect x="16" y="14" width="2" height="2" fill="#e5eff8"/><rect x="18" y="14" width="2" height="2" fill="#5a9a30"/><rect x="20" y="14" width="4" height="2" fill="#e5eff8"/><rect x="24" y="14" width="2" height="2" fill="#abaca4"/><rect x="2" y="16" width="2" height="2" fill="#a7aba7"/><rect x="4" y="16" width="2" height="2" fill="#e3eef7"/><rect x="6" y="16" width="2" height="2" fill="#5a9a30"/><rect x="8" y="16" width="2" height="2" fill="#e3eef7"/><rect x="10" y="16" width="6" height="2" fill="#dcecf8"/><rect x="16" y="16" width="2" height="2" fill="#e3eef7"/><rect x="18" y="16" width="2" height="2" fill="#5a9a30"/><rect x="20" y="16" width="4" height="2" fill="#e3eef7"/><rect x="24" y="16" width="2" height="2" fill="#a7aba7"/><rect x="2" y="18" width="2" height="2" fill="#a3aaab"/><rect x="4" y="18" width="2" height="2" fill="#e0ecf7"/><rect x="6" y="18" width="2" height="2" fill="#5a9a30"/><rect x="8" y="18" width="2" height="2" fill="#e0ecf7"/><rect x="10" y="18" width="6" height="2" fill="#dcecf8"/><rect x="16" y="18" width="2" height="2" fill="#e0ecf7"/><rect x="18" y="18" width="2" height="2" fill="#5a9a30"/><rect x="20" y="18" width="4" height="2" fill="#e0ecf7"/><rect x="24" y="18" width="2" height="2" fill="#a3aaab"/><rect x="2" y="20" width="2" height="2" fill="#9fa9ae"/><rect x="4" y="20" width="4" height="2" fill="#deebf6"/><rect x="8" y="20" width="2" height="2" fill="#5a9a30"/><rect x="10" y="20" width="8" height="2" fill="#deebf6"/><rect x="18" y="20" width="2" height="2" fill="#5a9a30"/><rect x="20" y="20" width="4" height="2" fill="#deebf6"/><rect x="24" y="20" width="2" height="2" fill="#9fa9ae"/><rect x="2" y="22" width="2" height="2" fill="#9aa7b2"/><rect x="4" y="22" width="6" height="2" fill="#dbeaf6"/><rect x="10" y="22" width="6" height="2" fill="#5a9a30"/><rect x="16" y="22" width="2" height="2" fill="#dbeaf6"/><rect x="18" y="22" width="2" height="2" fill="#5a9a30"/><rect x="20" y="22" width="4" height="2" fill="#dbeaf6"/><rect x="24" y="22" width="2" height="2" fill="#9aa7b2"/><rect x="2" y="24" width="2" height="2" fill="#96a6b5"/><rect x="4" y="24" width="20" height="2" fill="#d9e9f5"/><rect x="24" y="24" width="2" height="2" fill="#96a6b5"/><rect x="2" y="26" width="2" height="2" fill="#92a5b9"/><rect x="4" y="26" width="20" height="2" fill="#d6e7f5"/><rect x="24" y="26" width="2" height="2" fill="#92a5b9"/><rect x="2" y="28" width="24" height="2" fill="#8aa0b8"/></symbol><symbol id="jar" viewBox="0 0 32 32" overflow="visible"><rect x="4" y="2" width="16" height="2" fill="#b8b088"/><rect x="4" y="4" width="2" height="2" fill="#b4ae8c"/><rect x="6" y="4" width="12" height="2" fill="#f2f6fc"/><rect x="18" y="4" width="2" height="2" fill="#d8b868"/><rect x="20" y="4" width="2" height="2" fill="#b4ae8c"/><rect x="4" y="6" width="2" height="2" fill="#b1ac8f"/><rect x="6" y="6" width="12" height="2" fill="#f0f4fb"/><rect x="18" y="6" width="4" height="2" fill="#d8b868"/><rect x="22" y="6" width="2" height="2" fill="#b1ac8f"/><rect x="4" y="8" width="2" height="2" fill="#adaa93"/><rect x="6" y="8" width="2" height="2" fill="#eef3fb"/><rect x="8" y="8" width="8" height="2" fill="#8898c0"/><rect x="16" y="8" width="2" height="2" fill="#eef3fb"/><rect x="18" y="8" width="6" height="2" fill="#d8b868"/><rect x="24" y="8" width="2" height="2" fill="#adaa93"/><rect x="4" y="10" width="2" height="2" fill="#aaa997"/><rect x="6" y="10" width="18" height="2" fill="#edf2fa"/><rect x="24" y="10" width="2" height="2" fill="#aaa997"/><rect x="4" y="12" width="2" height="2" fill="#a6a79a"/><rect x="6" y="12" width="2" height="2" fill="#ebf0fa"/><rect x="8" y="12" width="14" height="2" fill="#8898c0"/><rect x="22" y="12" width="2" height="2" fill="#ebf0fa"/><rect x="24" y="12" width="2" height="2" fill="#a6a79a"/><rect x="4" y="14" width="2" height="2" fill="#a3a59e"/><rect x="6" y="14" width="18" height="2" fill="#e9eff9"/><rect x="24" y="14" width="2" height="2" fill="#a3a59e"/><rect x="-2" y="16" width="10" height="2" fill="#4a88c0"/><rect x="8" y="16" width="14" height="2" fill="#8898c0"/><rect x="22" y="16" width="2" height="2" fill="#e7eef9"/><rect x="24" y="16" width="2" height="2" fill="#9fa3a2"/><rect x="-2" y="18" width="10" height="2" fill="#1a4a88"/><rect x="8" y="18" width="16" height="2" fill="#e5edf8"/><rect x="24" y="18" width="2" height="2" fill="#9ca1a6"/><rect x="0" y="20" width="10" height="2" fill="#5aa868"/><rect x="10" y="20" width="12" height="2" fill="#8898c0"/><rect x="22" y="20" width="2" height="2" fill="#e3ebf8"/><rect x="24" y="20" width="2" height="2" fill="#989fa9"/><rect x="0" y="22" width="10" height="2" fill="#1a8a50"/><rect x="10" y="22" width="14" height="2" fill="#e2eaf7"/><rect x="24" y="22" width="2" height="2" fill="#959ead"/><rect x="-2" y="24" width="14" height="2" fill="#c8703a"/><rect x="12" y="24" width="6" height="2" fill="#8898c0"/><rect x="18" y="24" width="6" height="2" fill="#e0e9f7"/><rect x="24" y="24" width="2" height="2" fill="#919cb1"/><rect x="-2" y="26" width="2" height="2" fill="#c8703a"/><rect x="0" y="26" width="10" height="2" fill="#d8904a"/><rect x="10" y="26" width="2" height="2" fill="#c8703a"/><rect x="12" y="26" width="12" height="2" fill="#dee7f6"/><rect x="24" y="26" width="2" height="2" fill="#8e9ab4"/><rect x="-2" y="28" width="14" height="2" fill="#b84e20"/><rect x="12" y="28" width="14" height="2" fill="#8a98b8"/></symbol><symbol id="warn" viewBox="0 0 16 16" overflow="visible"><rect x="4" y="0" width="6" height="2" fill="#f0c890"/><rect x="10" y="0" width="2" height="2" fill="#ffffff"/><rect x="4" y="2" width="2" height="2" fill="#e09a40"/><rect x="6" y="2" width="2" height="2" fill="#fff4d0"/><rect x="8" y="2" width="2" height="2" fill="#e09a40"/><rect x="10" y="2" width="2" height="2" fill="#ffffff"/><rect x="2" y="4" width="2" height="2" fill="#f0c890"/><rect x="4" y="4" width="2" height="2" fill="#f6d270"/><rect x="6" y="4" width="2" height="2" fill="#5a3008"/><rect x="8" y="4" width="2" height="2" fill="#f6d270"/><rect x="10" y="4" width="2" height="2" fill="#f0c890"/><rect x="12" y="4" width="2" height="2" fill="#ffffff"/><rect x="2" y="6" width="2" height="2" fill="#e09a40"/><rect x="4" y="6" width="2" height="2" fill="#f6d270"/><rect x="6" y="6" width="2" height="2" fill="#5a3008"/><rect x="8" y="6" width="2" height="2" fill="#f6d270"/><rect x="10" y="6" width="2" height="2" fill="#e09a40"/><rect x="12" y="6" width="2" height="2" fill="#ffffff"/><rect x="0" y="8" width="2" height="2" fill="#f0c890"/><rect x="2" y="8" width="4" height="2" fill="#f6d270"/><rect x="6" y="8" width="2" height="2" fill="#c8a058"/><rect x="8" y="8" width="4" height="2" fill="#f6d270"/><rect x="12" y="8" width="2" height="2" fill="#f0c890"/><rect x="0" y="10" width="2" height="2" fill="#e09a40"/><rect x="2" y="10" width="4" height="2" fill="#f6d270"/><rect x="6" y="10" width="2" height="2" fill="#5a3008"/><rect x="8" y="10" width="4" height="2" fill="#f6d270"/><rect x="12" y="10" width="2" height="2" fill="#e09a40"/><rect x="0" y="12" width="2" height="2" fill="#e09a40"/><rect x="2" y="12" width="4" height="2" fill="#f6d270"/><rect x="6" y="12" width="2" height="2" fill="#c8a058"/><rect x="8" y="12" width="4" height="2" fill="#f6d270"/><rect x="12" y="12" width="2" height="2" fill="#e09a40"/><rect x="0" y="14" width="2" height="2" fill="#f0c890"/><rect x="2" y="14" width="10" height="2" fill="#e09a40"/><rect x="12" y="14" width="2" height="2" fill="#f0c890"/></symbol><symbol id="decl" viewBox="0 0 32 32" overflow="visible"><rect x="4" y="4" width="16" height="2" fill="#d8c498"/><rect x="4" y="6" width="2" height="2" fill="#d8c498"/><rect x="6" y="6" width="12" height="2" fill="#f4f6fc"/><rect x="18" y="6" width="2" height="2" fill="#eadcb0"/><rect x="20" y="6" width="2" height="2" fill="#d8c498"/><rect x="4" y="8" width="2" height="2" fill="#d8c498"/><rect x="6" y="8" width="12" height="2" fill="#f4f6fc"/><rect x="18" y="8" width="4" height="2" fill="#eadcb0"/><rect x="22" y="8" width="2" height="2" fill="#d8c498"/><rect x="4" y="10" width="2" height="2" fill="#d8c498"/><rect x="6" y="10" width="6" height="2" fill="#f4f6fc"/><rect x="12" y="10" width="2" height="2" fill="#98b0c8"/><rect x="14" y="10" width="4" height="2" fill="#f4f6fc"/><rect x="18" y="10" width="6" height="2" fill="#eadcb0"/><rect x="24" y="10" width="2" height="2" fill="#d8c498"/><rect x="4" y="12" width="2" height="2" fill="#d8c498"/><rect x="6" y="12" width="4" height="2" fill="#f4f6fc"/><rect x="10" y="12" width="2" height="2" fill="#98b0c8"/><rect x="12" y="12" width="12" height="2" fill="#f4f6fc"/><rect x="24" y="12" width="2" height="2" fill="#d8c498"/><rect x="4" y="14" width="2" height="2" fill="#d8c498"/><rect x="6" y="14" width="4" height="2" fill="#f4f6fc"/><rect x="10" y="14" width="2" height="2" fill="#98b0c8"/><rect x="12" y="14" width="12" height="2" fill="#f4f6fc"/><rect x="24" y="14" width="2" height="2" fill="#d8c498"/><rect x="4" y="16" width="2" height="2" fill="#d8c498"/><rect x="6" y="16" width="2" height="2" fill="#f4f6fc"/><rect x="8" y="16" width="2" height="2" fill="#98b0c8"/><rect x="10" y="16" width="4" height="2" fill="#f4f6fc"/><rect x="14" y="16" width="6" height="2" fill="#98b0c8"/><rect x="20" y="16" width="4" height="2" fill="#f4f6fc"/><rect x="24" y="16" width="2" height="2" fill="#d8c498"/><rect x="4" y="18" width="2" height="2" fill="#d8c498"/><rect x="6" y="18" width="4" height="2" fill="#f4f6fc"/><rect x="10" y="18" width="2" height="2" fill="#98b0c8"/><rect x="12" y="18" width="12" height="2" fill="#f4f6fc"/><rect x="24" y="18" width="2" height="2" fill="#d8c498"/><rect x="4" y="20" width="2" height="2" fill="#d8c498"/><rect x="6" y="20" width="4" height="2" fill="#f4f6fc"/><rect x="10" y="20" width="2" height="2" fill="#98b0c8"/><rect x="12" y="20" width="2" height="2" fill="#f4f6fc"/><rect x="14" y="20" width="6" height="2" fill="#98b0c8"/><rect x="20" y="20" width="2" height="2" fill="#f4f6fc"/><rect x="22" y="20" width="4" height="2" fill="#dcb888"/><rect x="4" y="22" width="2" height="2" fill="#d8c498"/><rect x="6" y="22" width="4" height="2" fill="#f4f6fc"/><rect x="10" y="22" width="2" height="2" fill="#98b0c8"/><rect x="12" y="22" width="10" height="2" fill="#f4f6fc"/><rect x="22" y="22" width="2" height="2" fill="#dcb888"/><rect x="24" y="22" width="2" height="2" fill="#fcf0c0"/><rect x="26" y="22" width="2" height="2" fill="#dcb888"/><rect x="4" y="24" width="2" height="2" fill="#d8c498"/><rect x="6" y="24" width="6" height="2" fill="#f4f6fc"/><rect x="12" y="24" width="2" height="2" fill="#98b0c8"/><rect x="14" y="24" width="2" height="2" fill="#f4f6fc"/><rect x="16" y="24" width="8" height="2" fill="#dcb888"/><rect x="24" y="24" width="4" height="2" fill="#fcf0c0"/><rect x="28" y="24" width="2" height="2" fill="#dcb888"/><rect x="4" y="26" width="2" height="2" fill="#d8c498"/><rect x="6" y="26" width="8" height="2" fill="#f4f6fc"/><rect x="14" y="26" width="2" height="2" fill="#dcb888"/><rect x="16" y="26" width="14" height="2" fill="#fcf0c0"/><rect x="30" y="26" width="2" height="2" fill="#dcb888"/><rect x="4" y="28" width="2" height="2" fill="#d8c498"/><rect x="6" y="28" width="8" height="2" fill="#f4f6fc"/><rect x="14" y="28" width="2" height="2" fill="#dcb888"/><rect x="16" y="28" width="14" height="2" fill="#fcf0c0"/><rect x="30" y="28" width="2" height="2" fill="#dcb888"/><rect x="4" y="30" width="10" height="2" fill="#d8c498"/><rect x="14" y="30" width="10" height="2" fill="#dcb888"/><rect x="24" y="30" width="4" height="2" fill="#fcf0c0"/><rect x="28" y="30" width="2" height="2" fill="#dcb888"/><rect x="22" y="32" width="2" height="2" fill="#dcb888"/><rect x="24" y="32" width="2" height="2" fill="#fcf0c0"/><rect x="26" y="32" width="2" height="2" fill="#dcb888"/><rect x="22" y="34" width="4" height="2" fill="#dcb888"/></symbol><symbol id="logcat" viewBox="0 0 32 32" overflow="visible"><rect x="0" y="0" width="2" height="2" fill="#ff1020"/><rect x="8" y="0" width="4" height="2" fill="#ff1020"/><rect x="12" y="0" width="10" height="2" fill="#000000"/><rect x="0" y="2" width="10" height="2" fill="#ff1020"/><rect x="10" y="2" width="2" height="2" fill="#000000"/><rect x="12" y="2" width="8" height="2" fill="#a8c448"/><rect x="20" y="2" width="10" height="2" fill="#000000"/><rect x="0" y="4" width="2" height="2" fill="#ff9020"/><rect x="2" y="4" width="2" height="2" fill="#ff1020"/><rect x="4" y="4" width="18" height="2" fill="#000000"/><rect x="22" y="4" width="4" height="2" fill="#a8c448"/><rect x="26" y="4" width="2" height="2" fill="#000000"/><rect x="28" y="4" width="2" height="2" fill="#a8c448"/><rect x="30" y="4" width="2" height="2" fill="#000000"/><rect x="0" y="6" width="4" height="2" fill="#ff9020"/><rect x="4" y="6" width="2" height="2" fill="#000000"/><rect x="6" y="6" width="14" height="2" fill="#a8c448"/><rect x="20" y="6" width="2" height="2" fill="#000000"/><rect x="22" y="6" width="8" height="2" fill="#a8c448"/><rect x="30" y="6" width="2" height="2" fill="#000000"/><rect x="0" y="8" width="2" height="2" fill="#ffff20"/><rect x="2" y="8" width="2" height="2" fill="#ff9020"/><rect x="4" y="8" width="6" height="2" fill="#000000"/><rect x="10" y="8" width="10" height="2" fill="#a8c448"/><rect x="20" y="8" width="2" height="2" fill="#000000"/><rect x="22" y="8" width="2" height="2" fill="#a8c448"/><rect x="24" y="8" width="2" height="2" fill="#ffffff"/><rect x="26" y="8" width="4" height="2" fill="#a8c448"/><rect x="30" y="8" width="2" height="2" fill="#000000"/><rect x="0" y="10" width="8" height="2" fill="#ffff20"/><rect x="8" y="10" width="2" height="2" fill="#000000"/><rect x="10" y="10" width="10" height="2" fill="#a8c448"/><rect x="20" y="10" width="2" height="2" fill="#000000"/><rect x="22" y="10" width="8" height="2" fill="#a8c448"/><rect x="30" y="10" width="2" height="2" fill="#000000"/><rect x="0" y="12" width="4" height="2" fill="#30e030"/><rect x="4" y="12" width="6" height="2" fill="#000000"/><rect x="10" y="12" width="10" height="2" fill="#a8c448"/><rect x="20" y="12" width="2" height="2" fill="#000000"/><rect x="22" y="12" width="2" height="2" fill="#a8c448"/><rect x="24" y="12" width="2" height="2" fill="#ffffff"/><rect x="26" y="12" width="4" height="2" fill="#a8c448"/><rect x="30" y="12" width="2" height="2" fill="#000000"/><rect x="0" y="14" width="2" height="2" fill="#1090f0"/><rect x="2" y="14" width="2" height="2" fill="#30e030"/><rect x="4" y="14" width="2" height="2" fill="#000000"/><rect x="6" y="14" width="14" height="2" fill="#a8c448"/><rect x="20" y="14" width="2" height="2" fill="#000000"/><rect x="22" y="14" width="8" height="2" fill="#a8c448"/><rect x="30" y="14" width="2" height="2" fill="#000000"/><rect x="0" y="16" width="4" height="2" fill="#1090f0"/><rect x="4" y="16" width="18" height="2" fill="#000000"/><rect x="22" y="16" width="4" height="2" fill="#a8c448"/><rect x="26" y="16" width="2" height="2" fill="#000000"/><rect x="28" y="16" width="2" height="2" fill="#a8c448"/><rect x="30" y="16" width="2" height="2" fill="#000000"/><rect x="0" y="18" width="10" height="2" fill="#6030f0"/><rect x="10" y="18" width="2" height="2" fill="#000000"/><rect x="12" y="18" width="8" height="2" fill="#a8c448"/><rect x="20" y="18" width="10" height="2" fill="#000000"/><rect x="2" y="20" width="6" height="2" fill="#6030f0"/><rect x="12" y="20" width="10" height="2" fill="#000000"/></symbol><symbol id="device" viewBox="0 0 32 32" overflow="visible"><rect x="2" y="0" width="14" height="2" fill="#888888"/><rect x="0" y="2" width="18" height="2" fill="#888888"/><rect x="0" y="4" width="2" height="2" fill="#888888"/><rect x="2" y="4" width="14" height="2" fill="#d9dde0"/><rect x="16" y="4" width="2" height="2" fill="#888888"/><rect x="0" y="6" width="2" height="2" fill="#888888"/><rect x="2" y="6" width="14" height="2" fill="#d9dde0"/><rect x="16" y="6" width="2" height="2" fill="#888888"/><rect x="0" y="8" width="2" height="2" fill="#888888"/><rect x="2" y="8" width="14" height="2" fill="#d9dde0"/><rect x="16" y="8" width="2" height="2" fill="#888888"/><rect x="0" y="10" width="2" height="2" fill="#888888"/><rect x="2" y="10" width="14" height="2" fill="#d9dde0"/><rect x="16" y="10" width="2" height="2" fill="#888888"/><rect x="0" y="12" width="2" height="2" fill="#888888"/><rect x="2" y="12" width="14" height="2" fill="#d9dde0"/><rect x="16" y="12" width="2" height="2" fill="#888888"/><rect x="0" y="14" width="2" height="2" fill="#888888"/><rect x="2" y="14" width="14" height="2" fill="#d9dde0"/><rect x="16" y="14" width="2" height="2" fill="#888888"/><rect x="0" y="16" width="18" height="2" fill="#888888"/><rect x="0" y="18" width="2" height="2" fill="#888888"/><rect x="2" y="18" width="4" height="2" fill="#66ee66"/><rect x="6" y="18" width="2" height="2" fill="#888888"/><rect x="8" y="18" width="2" height="2" fill="#dddddd"/><rect x="10" y="18" width="2" height="2" fill="#888888"/><rect x="12" y="18" width="4" height="2" fill="#ee6666"/><rect x="16" y="18" width="2" height="2" fill="#888888"/><rect x="0" y="20" width="18" height="2" fill="#888888"/><rect x="0" y="22" width="2" height="2" fill="#888888"/><rect x="2" y="22" width="2" height="2" fill="#dddddd"/><rect x="4" y="22" width="2" height="2" fill="#888888"/><rect x="6" y="22" width="2" height="2" fill="#dddddd"/><rect x="8" y="22" width="2" height="2" fill="#888888"/><rect x="10" y="22" width="2" height="2" fill="#dddddd"/><rect x="12" y="22" width="2" height="2" fill="#888888"/><rect x="14" y="22" width="2" height="2" fill="#dddddd"/><rect x="16" y="22" width="2" height="2" fill="#888888"/><rect x="0" y="24" width="18" height="2" fill="#888888"/><rect x="0" y="26" width="2" height="2" fill="#888888"/><rect x="2" y="26" width="2" height="2" fill="#dddddd"/><rect x="4" y="26" width="2" height="2" fill="#888888"/><rect x="6" y="26" width="2" height="2" fill="#dddddd"/><rect x="8" y="26" width="2" height="2" fill="#888888"/><rect x="10" y="26" width="2" height="2" fill="#dddddd"/><rect x="12" y="26" width="2" height="2" fill="#888888"/><rect x="14" y="26" width="2" height="2" fill="#dddddd"/><rect x="16" y="26" width="2" height="2" fill="#888888"/><rect x="0" y="28" width="18" height="2" fill="#888888"/><rect x="2" y="30" width="14" height="2" fill="#888888"/></symbol></defs></svg>
<div class="a" style="left:4px;top:14px;width:2px;height:1300px;background:#dcdcdc"></div><div class="a" style="left:804px;top:14px;width:4px;height:1300px;background:#dedede"></div><div class="a" style="left:822px;top:14px;width:2px;height:1105px;background:#dcdcdc"></div><div class="a" style="left:6px;top:8px;width:798px;height:1300px;background:#fff;border-radius:10px 10px 0 0"></div><div class="a" style="left:6px;top:8px;width:302px;height:61px;border-radius:10px 10px 0 0;background:linear-gradient(#c6cbd6 0,#d2d6de 60%,#f4f5f8 100%)"></div><div class="a" style="left:8px;top:10px;width:298px;height:59px;border-radius:8px 8px 0 0;background:linear-gradient(#e7e7e9,#fdfdfd)"></div><svg class="a" style="left:22px;top:24px" width="24" height="30" viewBox="0 0 24 30"><path d="M3 2 V28 M3 9 H10 M3 21 H10" stroke="#6b7280" stroke-width="2"/><rect x="10" y="4" width="10" height="10" fill="#c07838"/><rect x="10" y="16" width="10" height="10" fill="#c07838"/><path d="M15 4 V14 M10 9 H20 M15 16 V26 M10 21 H20" stroke="#8a5020" stroke-width="2"/><path d="M12 6h2v2h-2zM16 6h2v2h-2zM12 10h2v2h-2zM16 10h2v2h-2zM12 18h2v2h-2zM16 18h2v2h-2zM12 22h2v2h-2zM16 22h2v2h-2z" fill="#f4eaa0"/></svg><div class="tab" style="left:54.7px;top:24px;color:#000;font-size:25px;letter-spacing:0.4px">Package Explorer</div><svg class="a" style="left:272px;top:30px" width="20" height="20" viewBox="0 0 20 20"><path d="M1 1 H5.5 L10 5.5 L14.5 1 H19 V5.5 L14.5 10 L19 14.5 V19 H14.5 L10 14.5 L5.5 19 H1 V14.5 L5.5 10 L1 5.5 Z" fill="#fff" stroke="#000" stroke-width="2"/></svg><svg class="i" style="left:324px;top:24px"><use href="#device"/></svg><div class="tab" style="left:356.0px;top:24px;color:#7b7b7b;font-size:25px;letter-spacing:0.333px">Devices</div><svg class="a" style="left:566px;top:12px" width="40" height="44" viewBox="0 0 40 44"><rect x="7" y="11" width="20" height="20" fill="#d4ecf8" stroke="#a8b4c8" stroke-width="2"/><rect x="11" y="15" width="20" height="20" fill="#eef8fc" stroke="#8c9ab0" stroke-width="2"/><rect x="14" y="24" width="14" height="2" fill="#0c4c80"/></svg><svg class="a" style="left:600px;top:12px" width="50" height="44" viewBox="0 0 50 44"><path d="M13 15 L24 7 V13 L37 13 V17 L24 17 V23 Z" fill="#fbe8a8" stroke="#c0802c" stroke-width="2" stroke-linejoin="bevel"/><path d="M43 29 L32 37 V31 L19 31 V27 L32 27 V21 Z" fill="#fbe8a8" stroke="#b87428" stroke-width="2" stroke-linejoin="bevel"/></svg><svg class="a" style="left:673px;top:19px" width="22" height="12" viewBox="0 0 22 12"><path d="M1 1 H21 L11 11 Z" fill="#fff" stroke="#222" stroke-width="2"/></svg><div class="a" style="left:712px;top:24px;width:20px;height:8px;border:2px solid #000"></div><div class="a" style="left:756px;top:24px;width:20px;height:20px;border:2px solid #000"></div><div class="a" style="left:760px;top:28px;width:12px;height:2px;background:#000"></div><div class="a" style="left:760px;top:74px;width:30px;height:1200px;background:#f9f9f9;border-left:2px solid #ececec;border-right:2px solid #ececec"></div><div class="a" style="left:768px;top:257px;width:16px;height:638px;background:#c1c1c1;border-radius:8px"></div><div class="a" style="left:20px;top:1064px;width:740px;height:32px;background:#dcdcdc"></div><div class="arr ar" style="left:69px;top:84px"></div><svg class="i" style="left:92px;top:78px"><use href="#lib"/></svg><div class="t" style="left:126.0px;top:77px;letter-spacing:-0.083px">Android Private Libraries</div><div class="arr ar" style="left:69px;top:118px"></div><svg class="i" style="left:92px;top:112px"><use href="#lib"/></svg><div class="t" style="left:126.0px;top:111px;letter-spacing:-0.142px">Android Dependencies</div><div class="arr ad" style="left:67px;top:154px"></div><svg class="i" style="left:92px;top:146px"><use href="#srcfolder"/></svg><svg class="a" style="left:90px;top:162px;overflow:visible" width="16" height="16" viewBox="0 0 16 16" shape-rendering="crispEdges"><use href="#warn"/></svg><div class="t" style="left:125.5px;top:145px;letter-spacing:0.25px">src</div><div class="arr ad" style="left:99px;top:188px"></div><svg class="i" style="left:124px;top:180px"><use href="#pkg"/></svg><svg class="a" style="left:122px;top:196px;overflow:visible" width="16" height="16" viewBox="0 0 16 16" shape-rendering="crispEdges"><use href="#warn"/></svg><div class="t" style="left:157.3px;top:179px;letter-spacing:0.095px">com.codecanyon.blendoku</div><div class="arr ar" style="left:133px;top:220px"></div><svg class="i" style="left:156px;top:214px"><use href="#java"/></svg><div class="t" style="left:188.7px;top:213px;letter-spacing:-0.337px">Data.java</div><div class="arr ar" style="left:133px;top:254px"></div><svg class="i" style="left:156px;top:248px"><use href="#java"/></svg><svg class="a" style="left:154px;top:264px;overflow:visible" width="16" height="16" viewBox="0 0 16 16" shape-rendering="crispEdges"><use href="#warn"/></svg><div class="t" style="left:188.7px;top:247px;letter-spacing:-0.208px">FindColor.java</div><div class="arr ar" style="left:133px;top:288px"></div><svg class="i" style="left:156px;top:282px"><use href="#java"/></svg><svg class="a" style="left:154px;top:298px;overflow:visible" width="16" height="16" viewBox="0 0 16 16" shape-rendering="crispEdges"><use href="#warn"/></svg><div class="t" style="left:188.5px;top:281px;letter-spacing:-0.278px">mView.java</div><div class="arr ar" style="left:133px;top:322px"></div><svg class="i" style="left:156px;top:316px"><use href="#java"/></svg><div class="t" style="left:189.5px;top:315px;letter-spacing:-0.262px">SquareLayout.java</div><div class="arr ar" style="left:69px;top:356px"></div><svg class="i" style="left:92px;top:350px"><use href="#genfolder"/></svg><div class="t" style="left:125.5px;top:349px;letter-spacing:-0.276px">gen<span style="color:#957d55"> [Generated Java Files]</span></div><div class="arr ar" style="left:69px;top:390px"></div><svg class="i" style="left:92px;top:384px"><use href="#afolder"/></svg><div class="t" style="left:125.5px;top:383px;letter-spacing:-0.12px">assets</div><div class="arr ar" style="left:69px;top:424px"></div><svg class="i" style="left:92px;top:418px"><use href="#afolder"/></svg><div class="t" style="left:125.5px;top:417px;letter-spacing:0.5px">bin</div><div class="arr ad" style="left:67px;top:460px"></div><svg class="i" style="left:92px;top:452px"><use href="#afolder"/></svg><div class="t" style="left:124.5px;top:451px;letter-spacing:0.6px">libs</div><svg class="i" style="left:124px;top:486px"><use href="#jar"/></svg><div class="t" style="left:156.2px;top:485px;letter-spacing:0.067px">revmob.jar</div><div class="arr ad" style="left:67px;top:528px"></div><svg class="i" style="left:92px;top:520px"><use href="#afolder"/></svg><svg class="a" style="left:90px;top:536px;overflow:visible" width="16" height="16" viewBox="0 0 16 16" shape-rendering="crispEdges"><use href="#warn"/></svg><div class="t" style="left:124.5px;top:519px;letter-spacing:0.0px">res</div><div class="arr ar" style="left:101px;top:560px"></div><svg class="i" style="left:124px;top:554px"><use href="#folder"/></svg><div class="t" style="left:157.5px;top:553px;letter-spacing:0.067px">anim</div><div class="arr ar" style="left:101px;top:594px"></div><svg class="i" style="left:124px;top:588px"><use href="#folder"/></svg><div class="t" style="left:157.5px;top:587px;letter-spacing:0.214px">drawable</div><div class="arr ar" style="left:101px;top:628px"></div><svg class="i" style="left:124px;top:622px"><use href="#folder"/></svg><div class="t" style="left:157.5px;top:621px;letter-spacing:0.25px">drawable-hdpi</div><svg class="i" style="left:124px;top:656px"><use href="#folder"/></svg><div class="t" style="left:157.5px;top:655px;letter-spacing:0.367px">drawable-ldpi</div><div class="arr ar" style="left:101px;top:696px"></div><svg class="i" style="left:124px;top:690px"><use href="#folder"/></svg><div class="t" style="left:157.5px;top:689px;letter-spacing:0.208px">drawable-mdpi</div><div class="arr ar" style="left:101px;top:730px"></div><svg class="i" style="left:124px;top:724px"><use href="#folder"/></svg><div class="t" style="left:157.5px;top:723px;letter-spacing:0.269px">drawable-xhdpi</div><div class="arr ar" style="left:101px;top:764px"></div><svg class="i" style="left:124px;top:758px"><use href="#folder"/></svg><div class="t" style="left:157.5px;top:757px;letter-spacing:0.271px">drawable-xxhdpi</div><div class="arr ad" style="left:99px;top:800px"></div><svg class="i" style="left:124px;top:792px"><use href="#folder"/></svg><div class="t" style="left:156.5px;top:791px;letter-spacing:0.22px">layout</div><svg class="i" style="left:156px;top:826px"><use href="#xml"/></svg><div class="t" style="left:189.3px;top:825px;letter-spacing:-0.217px">game_over.xml</div><div class="arr ar" style="left:101px;top:866px"></div><svg class="i" style="left:124px;top:860px"><use href="#folder"/></svg><svg class="a" style="left:122px;top:876px;overflow:visible" width="16" height="16" viewBox="0 0 16 16" shape-rendering="crispEdges"><use href="#warn"/></svg><div class="t" style="left:156.5px;top:859px;letter-spacing:0.4px">layout-land</div><div class="arr ar" style="left:101px;top:900px"></div><svg class="i" style="left:124px;top:894px"><use href="#folder"/></svg><div class="t" style="left:156.5px;top:893px;letter-spacing:0.133px">menu</div><div class="arr ar" style="left:101px;top:934px"></div><svg class="i" style="left:124px;top:928px"><use href="#folder"/></svg><div class="t" style="left:156.5px;top:927px;letter-spacing:0.35px">raw</div><div class="arr ad" style="left:99px;top:970px"></div><svg class="i" style="left:124px;top:962px"><use href="#folder"/></svg><div class="t" style="left:158.5px;top:961px;letter-spacing:-0.4px">values</div><svg class="i" style="left:156px;top:996px"><use href="#xml"/></svg><div class="t" style="left:189.5px;top:995px;letter-spacing:0.25px">ads.xml</div><svg class="i" style="left:156px;top:1030px"><use href="#xml"/></svg><div class="t" style="left:189.5px;top:1029px;letter-spacing:0.222px">colors.xml</div><svg class="i" style="left:156px;top:1064px"><use href="#xml"/></svg><div class="t" style="left:189.5px;top:1063px;letter-spacing:0.25px">strings.xml</div><svg class="i" style="left:156px;top:1098px"><use href="#xml"/></svg><div class="t" style="left:189.5px;top:1097px;letter-spacing:0.133px">styles.xml</div><svg class="i" style="left:92px;top:1132px"><use href="#xml"/></svg><svg class="a" style="left:90px;top:1148px;overflow:visible" width="16" height="16" viewBox="0 0 16 16" shape-rendering="crispEdges"><use href="#warn"/></svg><div class="t" style="left:125.9px;top:1131px;letter-spacing:0.05px">AndroidManifest.xml</div><svg class="i" style="left:92px;top:1166px"><use href="#xml"/></svg><div class="t" style="left:124.5px;top:1165px;letter-spacing:0.5px">lint.xml</div><svg class="i" style="left:92px;top:1200px"><use href="#txt"/></svg><div class="t" style="left:125.5px;top:1199px;letter-spacing:0.253px">proguard-project.txt</div><svg class="i" style="left:92px;top:1234px"><use href="#txt"/></svg><div class="t" style="left:125.5px;top:1233px;letter-spacing:0.141px">project.properties</div><div class="arr ar" style="left:69px;top:1274px"></div><div class="a" style="left:824px;top:8px;width:1463px;height:1118px;background:#fff;border-radius:10px;border:2px solid #c0c0b8;box-shadow:0 3px 5px rgba(0,0,0,0.10)"></div><div class="a" style="left:826px;top:10px;width:1459px;height:50px;background:linear-gradient(#ececec 0,#d6d6d6 8px,#d6d6d6 100%);border-radius:8px 8px 0 0;border-bottom:2px solid #b3bdd0"></div><div class="a" style="left:1619px;top:9px;width:225px;height:52px;background:#fff;border:2px solid #b9c2d2;border-bottom:none;border-radius:10px 10px 0 0"></div><svg class="i" style="left:836px;top:20px"><use href="#xml"/></svg><div class="tab" style="left:872.4px;top:18px;font-size:26px;letter-spacing:0.217px">land/main.xml</div><svg class="i" style="left:1096px;top:20px"><use href="#xml"/></svg><div class="tab" style="left:1133.0px;top:18px;font-size:26px;letter-spacing:-0.25px">game_over.xml</div><svg class="i" style="left:1366px;top:20px"><use href="#java"/></svg><svg class="a" style="left:1364px;top:36px;overflow:visible" width="16" height="16" viewBox="0 0 16 16" shape-rendering="crispEdges"><use href="#warn"/></svg><div class="tab" style="left:1403.0px;top:18px;font-size:26px;letter-spacing:-0.154px">FindColor.java</div><svg class="i" style="left:1628px;top:20px"><use href="#xml"/></svg><div class="tab" style="left:1665.0px;top:18px;font-size:26px;letter-spacing:0.2px">strings.xml</div><svg class="i" style="left:1852px;top:20px"><use href="#java"/></svg><svg class="a" style="left:1850px;top:36px;overflow:visible" width="16" height="16" viewBox="0 0 16 16" shape-rendering="crispEdges"><use href="#warn"/></svg><div class="tab" style="left:1888.0px;top:18px;font-size:26px;letter-spacing:-0.222px">mView.java</div><svg class="a" style="left:1806px;top:26px" width="20" height="20" viewBox="0 0 20 20"><path d="M1 1 H5.5 L10 5.5 L14.5 1 H19 V5.5 L14.5 10 L19 14.5 V19 H14.5 L10 14.5 L5.5 19 H1 V14.5 L5.5 10 L1 5.5 Z" fill="#fff" stroke="#000" stroke-width="2"/></svg><svg class="a" style="left:2084px;top:22px" width="34" height="26" viewBox="0 0 34 26"><path d="M1 1 L6 5 L1 9 M9 1 L14 5 L9 9" fill="none" stroke="#111" stroke-width="2.2"/><path d="M21 10 V26 M17 13 H21 M31 10 V26 M27 13 H31" stroke="#555" stroke-width="2"/></svg><div class="a" style="left:2196px;top:24px;width:20px;height:8px;border:2px solid #000"></div><div class="a" style="left:2240px;top:24px;width:20px;height:20px;border:2px solid #000"></div><div class="a" style="left:2244px;top:28px;width:12px;height:2px;background:#000"></div><div class="a" style="left:838px;top:64px;width:24px;height:958px;background:#efefef"></div><div class="a" style="left:838px;top:184px;width:24px;height:60px;background:#cfe0f4;background-image:repeating-conic-gradient(#b2d0f0 0 25%,#e2edf9 0 50%);background-size:4px 4px"></div><div class="a" style="left:908px;top:64px;width:2px;height:958px;background:#ececec"></div><div class="a" style="left:914px;top:184px;width:1305px;height:30px;background:#e8f2fe"></div><div class="a" style="left:2219px;top:64px;width:27px;height:960px;background:#f9f9f9;border-left:2px solid #e6e6e6"></div><div class="a" style="left:2246px;top:64px;width:28px;height:987px;background:#eeeeee"></div><div class="a" style="left:838px;top:1022px;width:1381px;height:2px;background:#e6e6e6"></div><div class="a" style="left:910px;top:1024px;width:1336px;height:28px;background:#f9f9f9"></div><div class="a" style="left:838px;top:1024px;width:72px;height:27px;background:#f0f0f0"></div><div class="a" style="left:838px;top:1052px;width:1436px;height:2px;background:#8e8e8e"></div><div class="ln" style="left:849px;top:64px">1</div><div class="code" style="left:914px;top:65px"><span class="tg">&lt;?xml </span><span class="at">version</span>=<span class="av">&quot;1.0&quot;</span> <span class="at">encoding</span>=<span class="av">&quot;utf-8&quot;</span><span class="tg">?&gt;</span></div><div class="ln" style="left:849px;top:94px">2</div><div class="code" style="left:914px;top:95px"><span class="tg">&lt;resources&gt;</span></div><div class="ln" style="left:849px;top:124px">3</div><div class="code" style="left:914px;top:125px"></div><div class="ln" style="left:849px;top:154px">4</div><div class="code" style="left:914px;top:155px">    <span class="tg">&lt;string </span><span class="at">name</span>=<span class="av">&quot;app_name&quot;</span><span class="tg">&gt;</span>Blendoku<span class="tg">&lt;/string&gt;</span></div><div class="ln" style="left:849px;top:184px">5</div><div class="code" style="left:914px;top:185px">    <span class="tg">&lt;string </span><span class="at">name</span>=<span class="av">&quot;hello_world&quot;</span><span class="tg">&gt;</span>Hello world!<span class="tg">&lt;/string&gt;</span></div><div class="ln" style="left:849px;top:214px">6</div><div class="code" style="left:914px;top:215px">    <span class="tg">&lt;string </span><span class="at">name</span>=<span class="av">&quot;more_apps&quot;</span><span class="tg">&gt;</span>More Apps<span class="tg">&lt;/string&gt;</span></div><div class="ln" style="left:849px;top:244px">7</div><div class="code" style="left:914px;top:245px"></div><div class="ln" style="left:849px;top:274px">8</div><div class="code" style="left:914px;top:275px"><span class="tg">&lt;/resources&gt;</span></div><div class="ln" style="left:849px;top:304px">9</div><div class="code" style="left:914px;top:305px"></div><div class="a" style="left:970px;top:186px;width:14px;height:27px;border:2px solid #c0c0c0"></div><div class="a" style="left:1642px;top:185px;width:3px;height:28px;background:#000"></div><svg class="a" style="left:842px;top:1058px" width="44" height="44" viewBox="0 0 44 44"><rect x="6" y="8" width="30" height="28" fill="#eaf4fc"/><rect x="6" y="8" width="30" height="6" fill="#3a68c8"/><rect x="8" y="10" width="26" height="2" fill="#88aaf0"/><rect x="6" y="14" width="2" height="22" fill="#98a8c0"/><rect x="34" y="14" width="2" height="22" fill="#2a3a58"/><rect x="8" y="34" width="28" height="2" fill="#3a4a68"/><rect x="10" y="18" width="6" height="2" fill="#8090b0"/><rect x="10" y="26" width="6" height="2" fill="#8090b0"/><rect x="19" y="17" width="11" height="5" fill="none" stroke="#88a4bc" stroke-width="2"/><rect x="19" y="25" width="11" height="5" fill="none" stroke="#88a4bc" stroke-width="2"/></svg><div class="tab" style="left:884.0px;top:1066px;letter-spacing:-0.125px">Resources</div><div class="a" style="left:1006px;top:1052px;width:172px;height:60px;background:#fff;border:2px solid #9a9a9a;border-top:none;border-radius:0 0 8px 8px"></div><svg class="a" style="left:1010px;top:1058px" width="44" height="44" viewBox="0 0 44 44"><path d="M9 8 H31 M33 10 V34 M31 36 H9 M7 34 V10" stroke="#90a8d8" stroke-width="2"/><rect x="8" y="9" width="24" height="26" fill="#f8fbff"/><rect x="10" y="12" width="20" height="20" fill="#eaf4fc"/><rect x="12" y="14" width="14" height="2" fill="#1a8a20"/><rect x="14" y="18" width="6" height="2" fill="#c82020"/><rect x="16" y="22" width="14" height="2" fill="#1a6ad0"/><rect x="14" y="26" width="6" height="2" fill="#c82020"/><rect x="12" y="30" width="6" height="2" fill="#d0a030"/></svg><div class="tab" style="left:1053.0px;top:1066px;letter-spacing:0.3px">strings.xml</div><div class="a" style="left:824px;top:1142px;width:1500px;height:200px;background:#fff;border-radius:10px 0 0 0;border-left:2px solid #d8d8d8"></div><div class="a" style="left:1790px;top:1142px;width:184px;height:61px;border-radius:10px 10px 0 0;background:linear-gradient(#c6cbd6 0,#d2d6de 60%,#f4f5f8 100%)"></div><div class="a" style="left:1792px;top:1144px;width:180px;height:59px;border-radius:8px 8px 0 0;background:linear-gradient(#e9e9ec,#fdfdfd)"></div><div class="tab" style="left:872.8px;top:1158px;color:#7b7b7b;font-size:26px;letter-spacing:-0.043px">Problems</div><div class="tab" style="left:1041.0px;top:1158px;color:#7b7b7b;font-size:26px;letter-spacing:0.267px">Javadoc</div><div class="tab" style="left:1196.0px;top:1158px;color:#7b7b7b;font-size:26px;letter-spacing:0.1px">Declaration</div><div class="tab" style="left:1387.0px;top:1158px;color:#7b7b7b;font-size:26px;letter-spacing:-0.1px">Search</div><div class="tab" style="left:1525.7px;top:1158px;color:#7b7b7b;font-size:26px;letter-spacing:-0.117px">Console</div><div class="tab" style="left:1677.0px;top:1158px;color:#7b7b7b;font-size:26px;letter-spacing:-0.143px">Progress</div><div class="tab" style="left:1836.7px;top:1158px;font-size:26px;letter-spacing:0.06px">LogCat</div><svg class="a" style="left:1935px;top:1165px" width="20" height="20" viewBox="0 0 20 20"><path d="M1 1 H5.5 L10 5.5 L14.5 1 H19 V5.5 L14.5 10 L19 14.5 V19 H14.5 L10 14.5 L5.5 19 H1 V14.5 L5.5 10 L1 5.5 Z" fill="#fff" stroke="#000" stroke-width="2"/></svg><svg class="a" style="left:830px;top:1152px" width="40" height="44" viewBox="0 0 40 44"><path d="M7 19 V7 H30 L34 11 V35 L32 37 H21" fill="#f4fafe" stroke="#d8dce8" stroke-width="2"/><path d="M7 20 V7 H22" fill="none" stroke="#d0c8a8" stroke-width="2"/><circle cx="17" cy="15" r="5" fill="#f0a8b0"/><path d="M25 8 V36 M20 22 H32" stroke="#dde2ec" stroke-width="2"/><rect x="4" y="22" width="14" height="16" fill="#f2a4ac"/><path d="M8 26 L14 34 M14 26 L8 34" stroke="#fff" stroke-width="2.2"/><rect x="20" y="28" width="2" height="6" fill="#e6c898"/></svg><svg class="a" style="left:1006px;top:1160px" width="26" height="28" viewBox="0 0 26 28"><circle cx="12" cy="14" r="9" fill="none" stroke="#a8c4e0" stroke-width="2"/><path d="M16 9 V19 H19" fill="none" stroke="#98b8d8" stroke-width="2"/><circle cx="12.5" cy="14" r="3.5" fill="none" stroke="#98b8d8" stroke-width="2"/></svg><svg class="i" style="left:1156px;top:1154px"><use href="#decl"/></svg><svg class="a" style="left:1342px;top:1152px" width="44" height="44" viewBox="0 0 44 44"><path d="M21 17 L30 8 H37 V17 L27 27 Z" fill="#fcf2cc" stroke="#f0c890" stroke-width="2"/><path d="M16 19 H24 L27 23 V30 L21 35 L13 27 Z" fill="#e4e0e6" stroke="#d8c8b0" stroke-width="2"/><path d="M6 36 V31 L13 26 L21 34 L19 36 Z" fill="#fcf4c8" stroke="#f0cc9c" stroke-width="1.6"/><rect x="29" y="12" width="2" height="2" fill="#90a4d0"/><rect x="27" y="14" width="2" height="2" fill="#90a4d0"/></svg><svg class="a" style="left:1484px;top:1152px" width="44" height="44" viewBox="0 0 44 44"><rect x="6" y="8" width="26" height="22" fill="#98b8e0"/><rect x="8" y="10" width="22" height="18" fill="#a8b4c8"/><rect x="10" y="12" width="18" height="14" fill="#eef6fc"/><rect x="12" y="16" width="10" height="2" fill="#a0acd0"/><rect x="12" y="20" width="14" height="2" fill="#a8b4d4"/><rect x="14" y="30" width="10" height="2" fill="#98b0d0"/><rect x="8" y="32" width="22" height="2" fill="#98b0d0"/></svg><svg class="a" style="left:1634px;top:1152px" width="44" height="44" viewBox="0 0 44 44"><rect x="6" y="14" width="28" height="14" fill="#c8c8d0"/><rect x="8" y="16" width="14" height="10" fill="#b0d8b0"/><rect x="8" y="18" width="12" height="2" fill="#eef6ee"/><rect x="22" y="16" width="10" height="8" fill="#e8f4fa"/><circle cx="29" cy="31" r="7.5" fill="#a0cca0"/><circle cx="28" cy="30" r="4" fill="#d8ecd0"/><path d="M27 26 L32 31 L27 35 Z" fill="#fff"/></svg><svg class="i" style="left:1798px;top:1162px"><use href="#logcat"/></svg><div class="a" style="left:849px;top:1218px;width:275px;height:80px;border:2px solid #c0c0c0;background:#fff"></div><div class="tab" style="left:863.8px;top:1235px;letter-spacing:-0.15px">Saved Filters</div><svg class="a" style="left:1025px;top:1239px" width="26" height="26" viewBox="0 0 26 26"><path d="M9 1h8v8h8v8h-8v8h-8v-8h-8v-8h8z" fill="#22cc22"/></svg><div class="a" style="left:1070px;top:1248px;width:24px;height:8px;background:#e80c18;border:1px solid #d00818"></div><svg class="a" style="left:1110px;top:1244px" width="12" height="28" viewBox="0 0 12 28"><rect x="0" y="0" width="12" height="24" fill="#000"/><rect x="2" y="2" width="10" height="20" fill="#d8d8d8"/><path d="M4 7h8M4 11h8M4 15h8M4 19h8" stroke="#000" stroke-width="2"/></svg><div class="a" style="left:1152px;top:1240px;width:1122px;height:60px;border:2px solid #c8c8c8;border-radius:6px;background:#fff"></div><div class="a" style="left:2294px;top:1240px;width:40px;height:60px;border:2px solid #c8c8c8;border-radius:6px;background:#fff"></div>
</body></html>
